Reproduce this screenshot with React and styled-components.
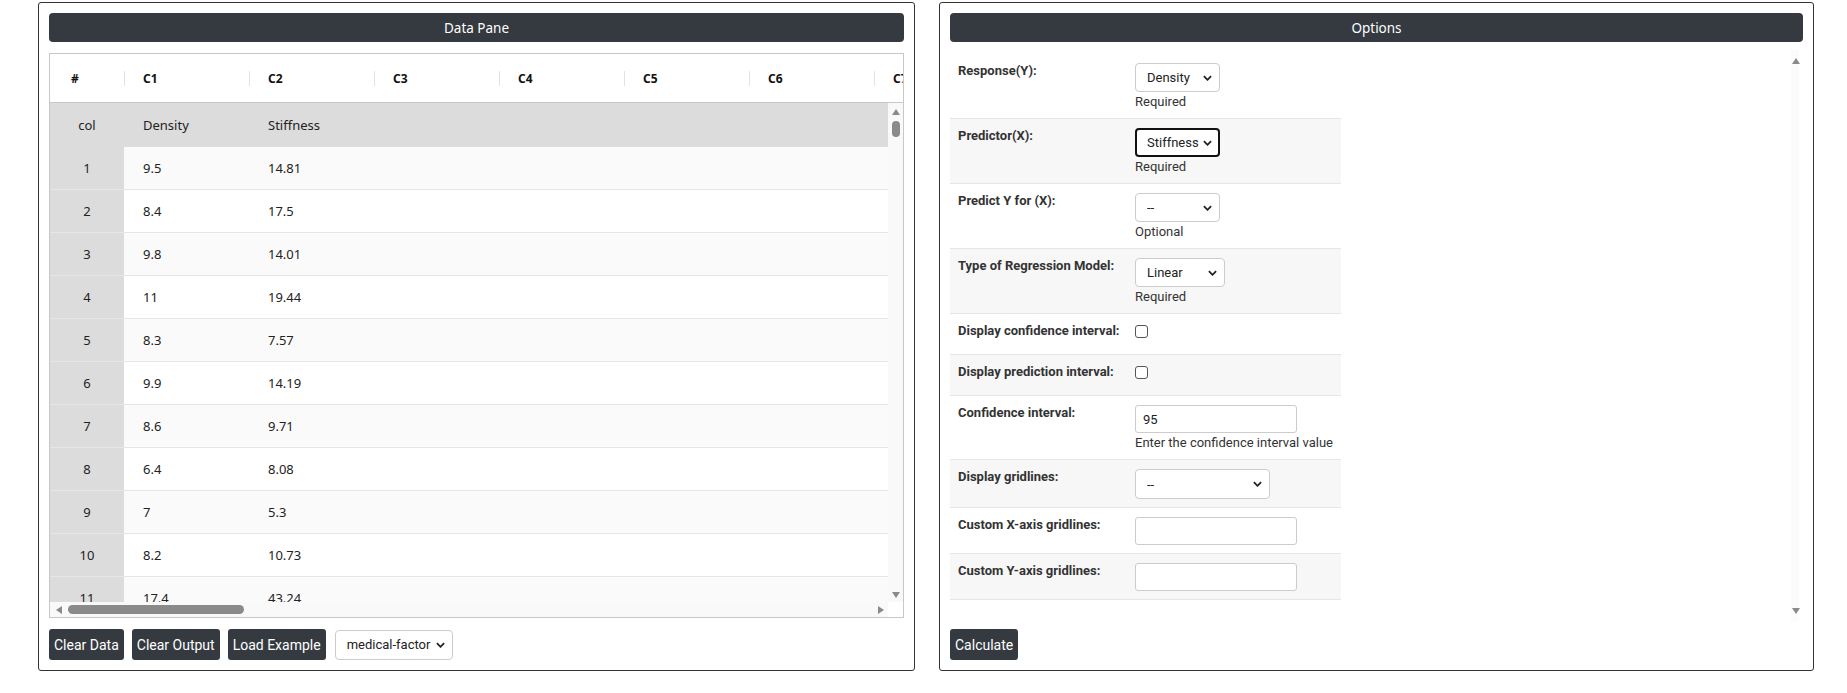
import React from "react";
import styled, { createGlobalStyle } from "styled-components";

const GlobalStyle = createGlobalStyle`
  body {
    margin: 0;
    background: #fff;
    color: #212529;
    font-family: Roboto, "Liberation Sans", sans-serif;
  }
`;

const columns = ["C1", "C2", "C3", "C4", "C5", "C6", "C7", "C8", "C9", "C10"];

const rows = [
  ["9.5", "14.81"],
  ["8.4", "17.5"],
  ["9.8", "14.01"],
  ["11", "19.44"],
  ["8.3", "7.57"],
  ["9.9", "14.19"],
  ["8.6", "9.71"],
  ["6.4", "8.08"],
  ["7", "5.3"],
  ["8.2", "10.73"],
  ["17.4", "43.24"],
  ["", ""],
];

const Chevron = () => (
  <svg width="9" height="6" viewBox="0 0 10 6">
    <polyline points="1,1 5,5 9,1" fill="none" stroke="#222" strokeWidth="2" />
  </svg>
);

const Arrow = ({ dir }) => {
  const pts = {
    up: "0,6 4,0 8,6",
    down: "0,0 8,0 4,6",
    left: "6,0 6,8 0,4",
    right: "0,0 6,4 0,8",
  }[dir];
  const vertical = dir === "up" || dir === "down";
  return (
    <svg width={vertical ? 8 : 6} height={vertical ? 6 : 8} viewBox={vertical ? "0 0 8 6" : "0 0 6 8"}>
      <polygon points={pts} fill="#8a8a8a" />
    </svg>
  );
};

const Page = styled.div`
  display: flex;
  gap: 24px;
  padding: 2px 0 0 38px;
`;

const Panel = styled.section`
  width: ${(p) => p.$w}px;
  height: 669px;
  box-sizing: border-box;
  border: 1px solid #333;
  border-radius: 3px;
  padding: 10px;
  display: flex;
  flex-direction: column;
`;

const PaneTitle = styled.div`
  height: 29px;
  flex: none;
  background: #343a40;
  border-radius: 4px;
  color: #fff;
  font-family: "Noto Sans", sans-serif;
  font-size: 13.5px;
  display: flex;
  align-items: center;
  justify-content: center;
`;

/* data grid */

const GridFrame = styled.div`
  flex: 1;
  margin: 11px 0;
  border: 1px solid #c8c8c8;
  display: grid;
  grid-template-columns: 1fr 15px;
  grid-template-rows: 49px 1fr 15px;
  min-height: 0;
  font-family: "Noto Sans", sans-serif;
`;

const HeadRow = styled.div`
  grid-column: 1 / -1;
  display: flex;
  overflow: hidden;
  background: #fff;
  border-bottom: 1px solid #c8c8c8;
  box-sizing: border-box;
`;

const HeadCell = styled.div`
  flex: none;
  width: ${(p) => (p.$index ? 74 : 125)}px;
  box-sizing: border-box;
  display: flex;
  align-items: center;
  padding-left: ${(p) => (p.$index ? 21 : 0)}px;
  font-size: 12px;
  font-weight: 700;
  color: #111;

  &::before {
    content: "";
    display: ${(p) => (p.$index ? "none" : "block")};
    width: 1px;
    height: 15px;
    background: #e2e2e2;
    margin-right: 18px;
  }
`;

const Body = styled.div`
  overflow: hidden;
  min-height: 0;
`;

const Row = styled.div`
  display: flex;
  height: ${(p) => (p.$caption ? 44 : 43)}px;
  box-sizing: border-box;
  border-bottom: 1px solid ${(p) => (p.$caption ? "#dcdcdc" : "#e4e6e8")};
  background: ${(p) => (p.$caption ? "#dcdcdc" : p.$odd ? "#fafafa" : "#fff")};
`;

const IndexCell = styled.div`
  flex: none;
  width: 74px;
  background: #dcdcdc;
  display: flex;
  align-items: center;
  justify-content: center;
  font-size: 13px;
  color: #222;
`;

const Cell = styled.div`
  flex: none;
  width: 125px;
  box-sizing: border-box;
  padding-left: 19px;
  display: flex;
  align-items: center;
  font-size: 13px;
  color: #222;
`;

const VScroll = styled.div`
  background: #f9f9f9;
  display: flex;
  flex-direction: column;
  align-items: center;
  padding: 6px 0 4px;
`;

const VThumb = styled.div`
  width: 8px;
  height: 16px;
  border-radius: 4px;
  background: #8a8a8a;
  margin-top: 6px;
`;

const HScroll = styled.div`
  background: #f9f9f9;
  display: flex;
  align-items: center;
  padding: 0 4px 0 6px;
`;

const HThumb = styled.div`
  width: 176px;
  height: 9px;
  border-radius: 5px;
  background: #8a8a8a;
  margin-left: 6px;
`;

const Spacer = styled.div`
  flex: 1;
`;

/* controls */

const Toolbar = styled.div`
  display: flex;
  align-items: center;
  gap: 8px;
`;

const DarkButton = styled.button`
  height: 31px;
  padding: 0 5px;
  border: none;
  border-radius: 3px;
  background: #343a40;
  color: #fff;
  font-family: Roboto, sans-serif;
  font-size: 14px;
  cursor: pointer;
`;

const SelectShell = styled.div`
  width: ${(p) => p.$w}px;
  height: ${(p) => p.$h || 29}px;
  box-sizing: border-box;
  border: ${(p) => (p.$focused ? "2px solid #111" : "1px solid #ccc")};
  border-radius: 4px;
  background: #fff;
  display: flex;
  align-items: center;
  justify-content: space-between;
  padding: 0 ${(p) => (p.$focused ? 6 : 7)}px 0 ${(p) => (p.$focused ? 10 : 11)}px;
  font-size: 13px;
  color: #222;
  margin-left: ${(p) => p.$ml || 0}px;
`;

const Select = ({ value, ...rest }) => (
  <SelectShell {...rest}>
    <span>{value}</span>
    <Chevron />
  </SelectShell>
);

/* options pane */

const OptionsArea = styled.div`
  flex: 1;
  min-height: 0;
  margin: 8px 0;
  display: grid;
  grid-template-columns: 1fr 15px;
`;

const OptionList = styled.div`
  overflow: hidden;
`;

const OptionRow = styled.div`
  width: 391px;
  display: grid;
  grid-template-columns: 177px 1fr;
  box-sizing: border-box;
  padding: 9px 0 8px 8px;
  border-bottom: 1px solid #e6e6e6;
  background: ${(p) => (p.$shade ? "#f7f7f7" : "#fff")};
  &:first-child {
    margin-top: 4px;
  }
`;

const OptionLabel = styled.label`
  font-size: 13px;
  font-weight: 700;
  line-height: 16px;
  color: #333;
`;

const Control = styled.div`
  display: flex;
  flex-direction: column;
  align-items: flex-start;
  min-height: ${(p) => (p.$check ? 23 : 0)}px;
`;

const Hint = styled.div`
  font-size: 13px;
  line-height: 16px;
  margin-top: 2px;
  color: #333;
`;

const Check = styled.span`
  width: 13px;
  height: 13px;
  box-sizing: border-box;
  margin-top: 2px;
  border: 1px solid #555;
  border-radius: 3px;
  background: #fff;
`;

const TextBox = styled.input`
  width: 162px;
  height: 28px;
  box-sizing: border-box;
  border: 1px solid #ccc;
  border-radius: 3px;
  padding: 0 7px;
  font-family: Roboto, sans-serif;
  font-size: 13px;
  color: #222;
  outline: none;
`;

const SideScroll = styled.div`
  display: flex;
  flex-direction: column;
  align-items: center;
  justify-content: space-between;
  padding: 8px 0 7px;
  background: linear-gradient(to right, #fff 3px, #fbfbfb 3px, #fbfbfb 11px, #fff 11px);
`;

const CalcRow = styled.div`
  display: flex;
`;

const options = [
  { label: "Response(Y):", kind: "select", value: "Density", w: 85, hint: "Required" },
  { label: "Predictor(X):", kind: "select", value: "Stiffness", w: 85, hint: "Required", focused: true },
  { label: "Predict Y for (X):", kind: "select", value: "--", w: 85, hint: "Optional" },
  { label: "Type of Regression Model:", kind: "select", value: "Linear", w: 90, hint: "Required" },
  { label: "Display confidence interval:", kind: "check" },
  { label: "Display prediction interval:", kind: "check" },
  { label: "Confidence interval:", kind: "input", value: "95", hint: "Enter the confidence interval value" },
  { label: "Display gridlines:", kind: "select", value: "--", w: 135, h: 30 },
  { label: "Custom X-axis gridlines:", kind: "input", value: "" },
  { label: "Custom Y-axis gridlines:", kind: "input", value: "" },
];

const DataPane = () => (
  <Panel $w={877}>
    <PaneTitle>Data Pane</PaneTitle>
    <GridFrame>
      <HeadRow>
        <HeadCell $index>#</HeadCell>
        {columns.map((c) => (
          <HeadCell key={c}>{c}</HeadCell>
        ))}
      </HeadRow>
      <Body>
        <Row $caption>
          <IndexCell>col</IndexCell>
          <Cell>Density</Cell>
          <Cell>Stiffness</Cell>
        </Row>
        {rows.map((r, i) => (
          <Row key={i} $odd={i % 2 === 0}>
            <IndexCell>{i + 1}</IndexCell>
            <Cell>{r[0]}</Cell>
            <Cell>{r[1]}</Cell>
          </Row>
        ))}
      </Body>
      <VScroll>
        <Arrow dir="up" />
        <VThumb />
        <Spacer />
        <Arrow dir="down" />
      </VScroll>
      <HScroll>
        <Arrow dir="left" />
        <HThumb />
        <Spacer />
        <Arrow dir="right" />
      </HScroll>
      <div />
    </GridFrame>
    <Toolbar>
      <DarkButton>Clear Data</DarkButton>
      <DarkButton>Clear Output</DarkButton>
      <DarkButton>Load Example</DarkButton>
      <Select value="medical-factor" $w={118} $h={30} $ml={1} />
    </Toolbar>
  </Panel>
);

const OptionsPane = () => (
  <Panel $w={875}>
    <PaneTitle>Options</PaneTitle>
    <OptionsArea>
      <OptionList>
        {options.map((o, i) => (
          <OptionRow key={o.label} $shade={i % 2 === 1}>
            <OptionLabel>{o.label}</OptionLabel>
            <Control $check={o.kind === "check"}>
              {o.kind === "select" && (
                <Select value={o.value} $w={o.w} $h={o.h} $focused={o.focused} />
              )}
              {o.kind === "check" && <Check />}
              {o.kind === "input" && <TextBox defaultValue={o.value} />}
              {o.hint && <Hint>{o.hint}</Hint>}
            </Control>
          </OptionRow>
        ))}
      </OptionList>
      <SideScroll>
        <Arrow dir="up" />
        <Arrow dir="down" />
      </SideScroll>
    </OptionsArea>
    <CalcRow>
      <DarkButton>Calculate</DarkButton>
    </CalcRow>
  </Panel>
);

export default function App() {
  return (
    <>
      <GlobalStyle />
      <Page>
        <DataPane />
        <OptionsPane />
      </Page>
    </>
  );
}
